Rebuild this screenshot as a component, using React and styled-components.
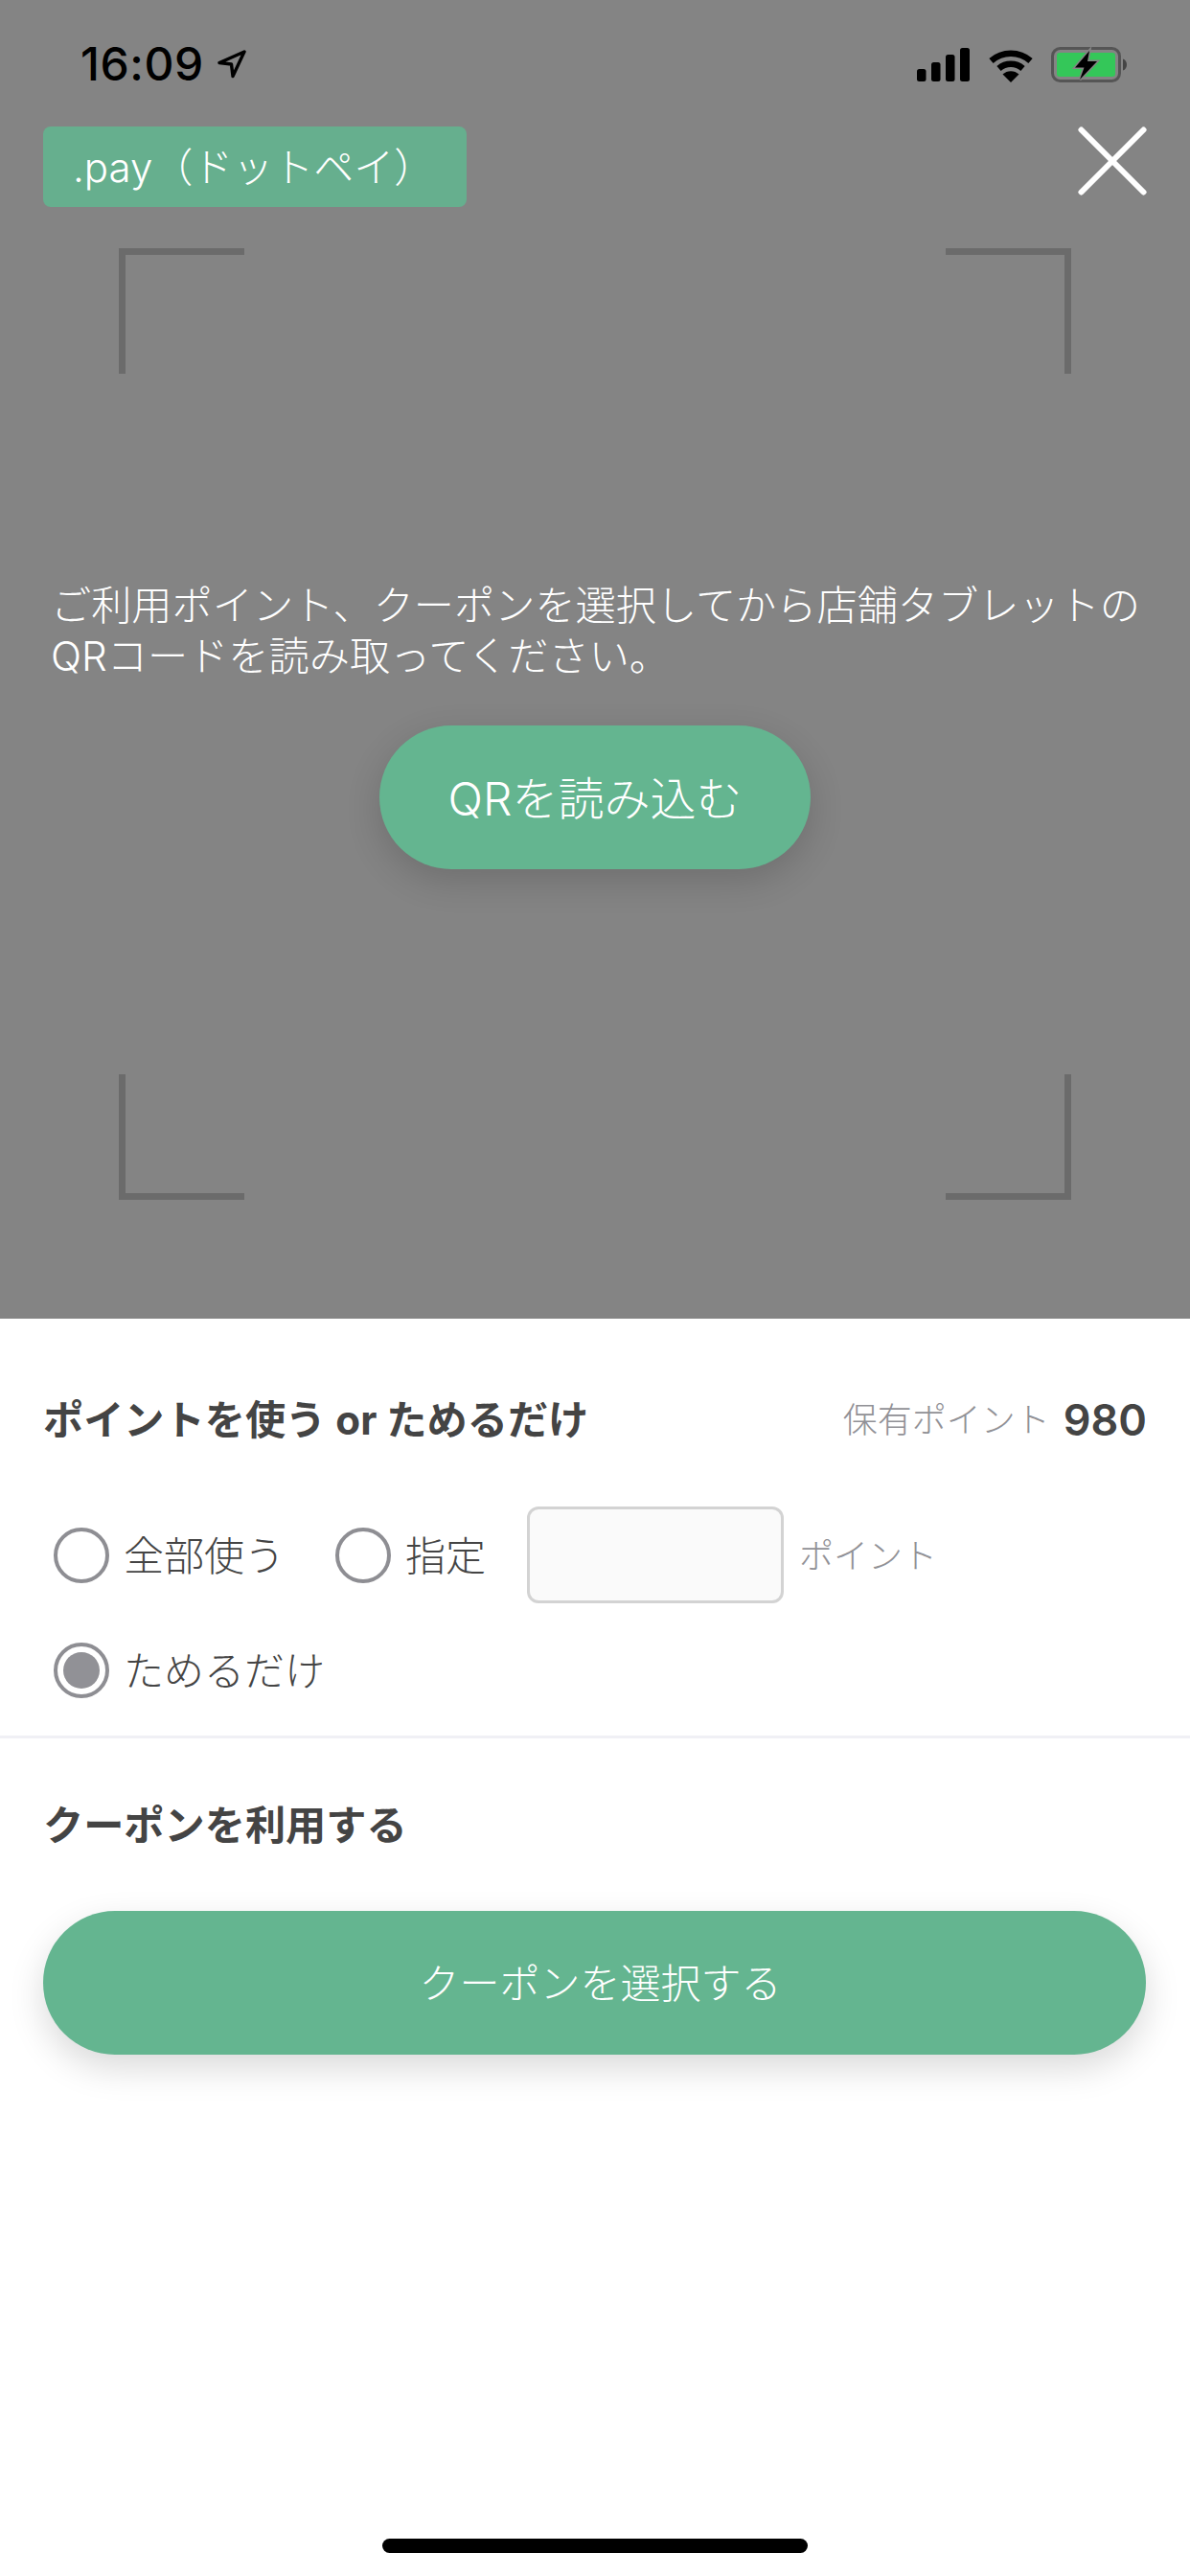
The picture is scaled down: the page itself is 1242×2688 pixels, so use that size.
import styled, { createGlobalStyle } from "styled-components";

const GlobalStyle = createGlobalStyle`
  html, body {
    margin: 0;
    padding: 0;
    background: #fff;
  }
  * {
    box-sizing: border-box;
  }
`;

const fontStack = `Inter, "Noto Sans CJK JP", sans-serif`;
const green = "#64b590";
const overlay = "#848484";

const Screen = styled.div`
  width: 1242px;
  height: 2688px;
  display: flex;
  flex-direction: column;
  overflow: hidden;
  font-family: ${fontStack};
  background: #fff;
`;

const Scanner = styled.section`
  position: relative;
  height: 1376px;
  flex: none;
  background: ${overlay};
`;

const StatusBar = styled.div`
  height: 132px;
  padding: 49px 65px 0 84px;
  display: flex;
  justify-content: space-between;
  align-items: flex-start;
`;

const TimeGroup = styled.div`
  display: flex;
  align-items: center;
  gap: 13px;
`;

const Time = styled.span`
  font-size: 48px;
  line-height: 36px;
  font-weight: 500;
  color: #000;
  letter-spacing: 0.6px;
`;

const StatusIcons = styled.div`
  display: flex;
  align-items: center;
  gap: 18.5px;
`;

const TopRow = styled.div`
  position: relative;
  z-index: 1;
  height: 84px;
  padding: 0 45px;
  display: flex;
  justify-content: space-between;
  align-items: flex-start;
`;

const Tag = styled.div`
  width: 442px;
  height: 84px;
  padding: 0 0 5px 31px;
  display: flex;
  align-items: center;
  background: #66af8e;
  border-radius: 8px;
  color: #fff;
  font-size: 42px;
  font-weight: 300;
  white-space: nowrap;
`;

const CloseButton = styled.button`
  width: 72px;
  height: 72px;
  padding: 0;
  border: 0;
  background: none;
  display: block;
`;

const Viewfinder = styled.div`
  position: absolute;
  top: 259px;
  left: 124px;
  width: 994px;
  height: 993px;
  display: grid;
  grid-template-columns: 131px 131px;
  grid-template-rows: 131px 131px;
  justify-content: space-between;
  align-content: space-between;
`;

const Corner = styled.div`
  border-style: solid;
  border-color: #6b6b6b;
  border-width: ${({ $v, $h }) =>
    `${$v === "top" ? 7 : 0}px ${$h === "right" ? 7 : 0}px ${$v === "bottom" ? 7 : 0}px ${$h === "left" ? 7 : 0}px`};
`;

const ScanMessage = styled.div`
  position: relative;
  z-index: 1;
  margin-top: 389px;
  padding-left: 53px;
`;

const MessageText = styled.p`
  margin: 0;
  color: #fff;
  font-size: 42.2px;
  line-height: 53px;
  font-weight: 300;
  white-space: pre;
`;

const PillButton = styled.button`
  height: 150px;
  width: ${({ $wide }) => ($wide ? "1151px" : "450px")};
  padding: ${({ $wide }) => ($wide ? "0 0 5px 12px" : "0 0 5px")};
  border: 0;
  border-radius: 75px;
  background: ${green};
  color: #fff;
  font-family: ${fontStack};
  font-weight: 300;
  font-size: ${({ $wide }) => ($wide ? "42px" : "48px")};
  box-shadow: ${({ $wide }) =>
    $wide ? "0 14px 36px rgba(0, 0, 0, 0.15)" : "0 12px 36px rgba(0, 0, 0, 0.16)"};
  display: block;
`;

const QrButtonWrap = styled.div`
  position: relative;
  z-index: 1;
  margin-top: 46px;
  display: flex;
  justify-content: center;
`;

const Panel = styled.section`
  flex: 1;
  display: flex;
  flex-direction: column;
  color: #444;
`;

const SectionHeader = styled.div`
  height: 50px;
  padding: 0 45px;
  margin-top: ${({ $top }) => $top}px;
  display: flex;
  justify-content: space-between;
  align-items: center;
`;

const SectionTitle = styled.h2`
  margin: 0;
  padding-bottom: 5px;
  font-size: 42.2px;
  font-weight: 700;
  color: #444;
`;

const Balance = styled.div`
  display: flex;
  align-items: center;
  gap: 14px;
`;

const MutedText = styled.span`
  padding-bottom: 4px;
  font-size: 36px;
  font-weight: 300;
  color: #919196;
`;

const BalanceValue = styled.span`
  font-size: 45px;
  font-weight: 600;
  color: #444;
`;

const OptionRow = styled.div`
  height: ${({ $height }) => $height}px;
  margin-top: ${({ $top }) => $top}px;
  padding-left: 56px;
  display: flex;
  align-items: center;
`;

const Radio = styled.span`
  width: 58px;
  height: 58px;
  flex: none;
  border: 4px solid #8e8e93;
  border-radius: 50%;
  display: flex;
  align-items: center;
  justify-content: center;

  &::after {
    content: "";
    display: ${({ $checked }) => ($checked ? "block" : "none")};
    width: 38px;
    height: 38px;
    border-radius: 50%;
    background: #919196;
  }
`;

const OptionLabel = styled.span`
  margin: 0 ${({ $after }) => $after}px 0 15px;
  padding-bottom: 5px;
  font-size: 42px;
  font-weight: 300;
  color: #444;
`;

const PointInput = styled.input`
  width: 268px;
  height: 101px;
  border: 3px solid #d3d3d3;
  border-radius: 12px;
  background: #fafafa;
  outline: none;
  margin-right: 16px;
`;

const Divider = styled.hr`
  height: 3px;
  margin: 39px 0 0;
  border: 0;
  background: #f0f0f5;
`;

const CouponButtonWrap = styled.div`
  margin-top: 65px;
  padding: 0 45px;
`;

const HomeIndicator = styled.div`
  width: 444px;
  height: 15px;
  margin: auto auto 24px;
  border-radius: 8px;
  background: #000;
`;

const LocationArrow = () => (
  <svg width="32" height="32" viewBox="0 0 32 32" fill="none">
    <path d="M29 3 3 14.5 15.5 16 17 28.5Z" stroke="#000" strokeWidth="3.4" strokeLinejoin="round" />
  </svg>
);

const SignalIcon = () => (
  <svg width="55" height="35" viewBox="0 0 55 35" fill="#000">
    <rect x="0" y="22" width="9.5" height="13" rx="2.5" />
    <rect x="15" y="15" width="9.5" height="20" rx="2.5" />
    <rect x="30" y="7" width="9.5" height="28" rx="2.5" />
    <rect x="45" y="0" width="10" height="35" rx="2.5" />
  </svg>
);

const WifiIcon = () => (
  <svg width="48" height="36" viewBox="0 0 48 36" fill="none">
    <path d="M3.5 13.5A31 31 0 0 1 44.5 13.5" stroke="#000" strokeWidth="6.5" />
    <path d="M11.5 21.5A19 19 0 0 1 36.5 21.5" stroke="#000" strokeWidth="6.5" />
    <path d="M24 36 15.5 27.5A12.5 12.5 0 0 1 32.5 27.5Z" fill="#000" />
  </svg>
);

const BatteryIcon = () => (
  <svg width="80" height="37" viewBox="0 0 80 37" fill="none">
    <rect x="1.5" y="1.5" width="70" height="34" rx="8" stroke="#555" strokeWidth="3" />
    <rect x="6" y="6" width="61" height="25" rx="3" fill="#34c759" />
    <path d="M75 12.5c2.5.7 4 3 4 6s-1.500 5.300-4 6Z" fill="#444" />
    <path d="M40 4 25 21.500h9.500L30 34 48 15h-10Z" fill="#000" stroke={overlay} strokeWidth="3" paintOrder="stroke" />
  </svg>
);

const CloseIcon = () => (
  <svg width="72" height="72" viewBox="0 0 72 72" fill="none" stroke="#fff" strokeWidth="6" strokeLinecap="round">
    <path d="M3.500 3.500 68.500 68.500" />
    <path d="M68.500 3.500 3.500 68.500" />
  </svg>
);

const App = () => {
  return (
    <Screen>
      <GlobalStyle />
      <Scanner>
        <Viewfinder>
          <Corner $v="top" $h="left" />
          <Corner $v="top" $h="right" />
          <Corner $v="bottom" $h="left" />
          <Corner $v="bottom" $h="right" />
        </Viewfinder>

        <StatusBar>
          <TimeGroup>
            <Time>16:09</Time>
            <LocationArrow />
          </TimeGroup>
          <StatusIcons>
            <SignalIcon />
            <WifiIcon />
            <BatteryIcon />
          </StatusIcons>
        </StatusBar>

        <TopRow>
          <Tag>.pay（ドットペイ）</Tag>
          <CloseButton aria-label="close">
            <CloseIcon />
          </CloseButton>
        </TopRow>

        <ScanMessage>
          <MessageText>
            {"ご利用ポイント、クーポンを選択してから店舗タブレットの\nQRコードを読み取ってください。"}
          </MessageText>
        </ScanMessage>

        <QrButtonWrap>
          <PillButton>QRを読み込む</PillButton>
        </QrButtonWrap>
      </Scanner>

      <Panel>
        <SectionHeader $top={80}>
          <SectionTitle>ポイントを使う or ためるだけ</SectionTitle>
          <Balance>
            <MutedText>保有ポイント</MutedText>
            <BalanceValue>980</BalanceValue>
          </Balance>
        </SectionHeader>

        <OptionRow $top={66} $height={101}>
          <Radio />
          <OptionLabel $after={53}>全部使う</OptionLabel>
          <Radio />
          <OptionLabel $after={43}>指定</OptionLabel>
          <PointInput type="text" />
          <MutedText>ポイント</MutedText>
        </OptionRow>

        <OptionRow $top={41} $height={58}>
          <Radio $checked />
          <OptionLabel $after={0}>ためるだけ</OptionLabel>
        </OptionRow>

        <Divider />

        <SectionHeader $top={65}>
          <SectionTitle>クーポンを利用する</SectionTitle>
        </SectionHeader>

        <CouponButtonWrap>
          <PillButton $wide>クーポンを選択する</PillButton>
        </CouponButtonWrap>

        <HomeIndicator />
      </Panel>
    </Screen>
  );
};

export default App;
